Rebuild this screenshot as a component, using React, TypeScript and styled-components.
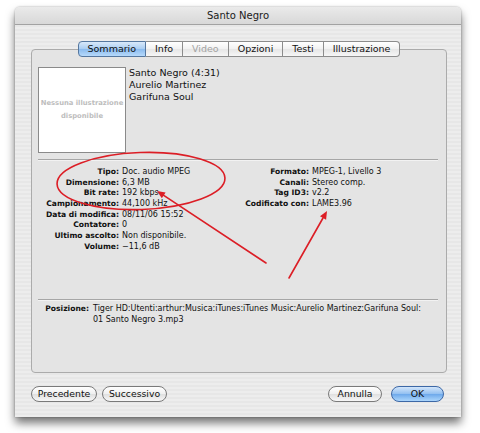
import { Fragment } from "react";
import styled, { createGlobalStyle } from "styled-components";

const GlobalStyle = createGlobalStyle`
    html, body {
        margin: 0;
        background: #ffffff;
    }
    body {
        font-family: "DejaVu Sans", "Liberation Sans", sans-serif;
        color: #111111;
    }
`;

const Page = styled.div`
    position: relative;
    width: 480px;
    height: 433px;
    padding: 7px 0 0 15px;
    box-sizing: border-box;
`;

const Window = styled.div`
    display: flex;
    flex-direction: column;
    width: 446px;
    height: 410px;
    border-radius: 5px 5px 0 0;
    background: repeating-linear-gradient(
        to bottom,
        #ededed 0px,
        #ededed 2px,
        #e7e7e7 2px,
        #e7e7e7 4px
    );
    box-shadow: 0 6px 10px rgba(0, 0, 0, 0.55), 0 0 2px rgba(0, 0, 0, 0.35);
`;

const TitleBar = styled.div`
    flex: none;
    height: 17px;
    border-bottom: 1px solid #a2a2a2;
    border-radius: 5px 5px 0 0;
    background: linear-gradient(#eaeaea, #d8d8d8);
    font-size: 10px;
    line-height: 18px;
    text-align: center;
    color: #1a1a1a;
`;

const Body = styled.div`
    display: flex;
    flex-direction: column;
    padding: 16px 14px 0 16px;
`;

const TabRow = styled.div`
    display: flex;
    justify-content: center;
    position: relative;
    z-index: 1;
    height: 16px;
    margin-bottom: -8px;
`;

const Tab = styled.div<{ $active?: boolean; $disabled?: boolean }>`
    box-sizing: border-box;
    height: 16px;
    padding: 0 9px;
    font-size: 9.5px;
    line-height: 14px;
    white-space: nowrap;
    color: ${(p) => (p.$disabled ? "#a3a3a3" : "#111111")};
    border: 1px solid ${(p) => (p.$active ? "#55779f" : "#8c8c8c")};
    border-left-width: 0;
    background: ${(p) =>
        p.$active
            ? "linear-gradient(#d9e9fa, #a9cdf2 50%, #8bbbee 52%, #b6d9fb)"
            : "linear-gradient(#ffffff, #f1f1f1 50%, #e6e6e6 52%, #f6f6f6)"};

    &:first-child {
        border-left-width: 1px;
        border-radius: 4px 0 0 4px;
    }
    &:last-child {
        border-radius: 0 4px 4px 0;
    }
`;

const GroupBox = styled.div`
    display: flex;
    flex-direction: column;
    box-sizing: border-box;
    height: 324px;
    padding: 17px 8px 0 6px;
    border: 1px solid #ababab;
    border-radius: 4px;
    background: #e4e4e4;
`;

const TopSection = styled.div`
    display: flex;
    gap: 3px;
`;

const Artwork = styled.div`
    display: flex;
    flex-direction: column;
    align-items: center;
    justify-content: center;
    box-sizing: border-box;
    width: 88px;
    height: 86px;
    border: 1px solid #8a8a8a;
    background: #ffffff;
    font-size: 6.8px;
    font-weight: bold;
    line-height: 13px;
    color: #bdbdbd;
    text-align: center;
`;

const TrackLines = styled.div`
    font-size: 9.5px;
    line-height: 12px;
`;

const Separator = styled.div<{ $top: number }>`
    flex: none;
    height: 1px;
    margin-top: ${(p) => p.$top}px;
    background: #a6a6a6;
    box-shadow: 0 1px 0 #f2f2f2;
`;

const InfoSection = styled.div`
    display: grid;
    grid-template-columns: 200px 1fr;
    box-sizing: border-box;
    height: 139px;
    padding-top: 7px;
`;

const Column = styled.div<{ $labelWidth: number; $gap?: number }>`
    display: grid;
    grid-template-columns: ${(p) => p.$labelWidth}px 1fr;
    grid-auto-rows: 10.7px;
    column-gap: ${(p) => p.$gap ?? 3}px;
    align-content: start;
`;

const Label = styled.div`
    font-size: 7.6px;
    font-weight: bold;
    line-height: 10.7px;
    text-align: right;
    white-space: nowrap;
`;

const Value = styled.div`
    font-size: 8px;
    line-height: 10.7px;
    white-space: nowrap;
`;

const LocationRow = styled.div`
    padding-top: 4px;
`;

const Footer = styled.div`
    display: flex;
    align-items: center;
    gap: 5px;
    padding: 13px 17px 0 16px;
`;

const Spacer = styled.div`
    flex: 1;
`;

const Button = styled.button<{ $w: number; $default?: boolean }>`
    box-sizing: border-box;
    width: ${(p) => p.$w}px;
    height: 16px;
    padding: 0;
    margin-left: ${(p) => (p.$default ? 4 : 0)}px;
    border: 1px solid ${(p) => (p.$default ? "#3d68a6" : "#7a7a7a")};
    border-radius: 8px;
    background: ${(p) =>
        p.$default
            ? "linear-gradient(#d3e6fb, #94c1f1 48%, #6ea9eb 52%, #acd6fc)"
            : "linear-gradient(#ffffff, #f0f0f0 48%, #e0e0e0 52%, #f7f7f7)"};
    font-family: inherit;
    font-size: 9.3px;
    line-height: 14px;
    color: #111111;
    text-align: center;
`;

const Annotations = styled.svg`
    position: absolute;
    top: 0;
    left: 0;
    pointer-events: none;
`;

const leftInfo: [string, string][] = [
    ["Tipo:", "Doc. audio MPEG"],
    ["Dimensione:", "6,3 MB"],
    ["Bit rate:", "192 kbps"],
    ["Campionamento:", "44,100 kHz"],
    ["Data di modifica:", "08/11/06 15:52"],
    ["Contatore:", "0"],
    ["Ultimo ascolto:", "Non disponibile."],
    ["Volume:", "\u221211,6 dB"],
];

const rightInfo: [string, string][] = [
    ["Formato:", "MPEG\u20111, Livello 3"],
    ["Canali:", "Stereo comp."],
    ["Tag ID3:", "v2.2"],
    ["Codificato con:", "LAME3.96"],
];

const tabs = ["Sommario", "Info", "Video", "Opzioni", "Testi", "Illustrazione"];

function InfoColumn({ rows, labelWidth }: { rows: [string, string][]; labelWidth: number }) {
    return (
        <Column $labelWidth={labelWidth}>
            {rows.map(([k, v]) => (
                <Fragment key={k}>
                    <Label>{k}</Label>
                    <Value>{v}</Value>
                </Fragment>
            ))}
        </Column>
    );
}

export default function App() {
    return (
        <>
            <GlobalStyle />
            <Page>
                <Window>
                    <TitleBar>Santo Negro</TitleBar>
                    <Body>
                        <TabRow>
                            {tabs.map((t) => (
                                <Tab key={t} $active={t === "Sommario"} $disabled={t === "Video"}>
                                    {t}
                                </Tab>
                            ))}
                        </TabRow>
                        <GroupBox>
                            <TopSection>
                                <Artwork>
                                    <div>Nessuna illustrazione</div>
                                    <div>disponibile</div>
                                </Artwork>
                                <TrackLines>
                                    <div>Santo Negro (4:31)</div>
                                    <div>Aurelio Martinez</div>
                                    <div>Garifuna Soul</div>
                                </TrackLines>
                            </TopSection>
                            <Separator $top={6} />
                            <InfoSection>
                                <InfoColumn rows={leftInfo} labelWidth={81} />
                                <InfoColumn rows={rightInfo} labelWidth={71} />
                            </InfoSection>
                            <Separator $top={0} />
                            <LocationRow>
                                <Column $labelWidth={51} $gap={4}>
                                    <Label>Posizione:</Label>
                                    <Value>
                                        Tiger HD:Utenti:arthur:Musica:iTunes:iTunes Music:Aurelio Martinez:Garifuna Soul:
                                        <br />
                                        01 Santo Negro 3.mp3
                                    </Value>
                                </Column>
                            </LocationRow>
                        </GroupBox>
                    </Body>
                    <Footer>
                        <Button $w={66}>Precedente</Button>
                        <Button $w={65}>Successivo</Button>
                        <Spacer />
                        <Button $w={54}>Annulla</Button>
                        <Button $w={53} $default>
                            OK
                        </Button>
                    </Footer>
                </Window>
                <Annotations width={480} height={433} viewBox="0 0 480 433">
                    <g stroke="#dc1e26" strokeWidth={1.6} fill="none" strokeLinecap="round">
                        <ellipse cx={141} cy={181} rx={84} ry={28.5} transform="rotate(-2 141 181)" />
                        <line x1={266} y1={263} x2={163.7} y2={195.4} />
                        <line x1={289} y1={278} x2={323} y2={218} />
                    </g>
                    <g fill="#dc1e26">
                        <polygon points="157,191 165.6,192.5 161.8,198.3" />
                        <polygon points="327,211 326.1,219.7 320,216.3" />
                    </g>
                </Annotations>
            </Page>
        </>
    );
}
